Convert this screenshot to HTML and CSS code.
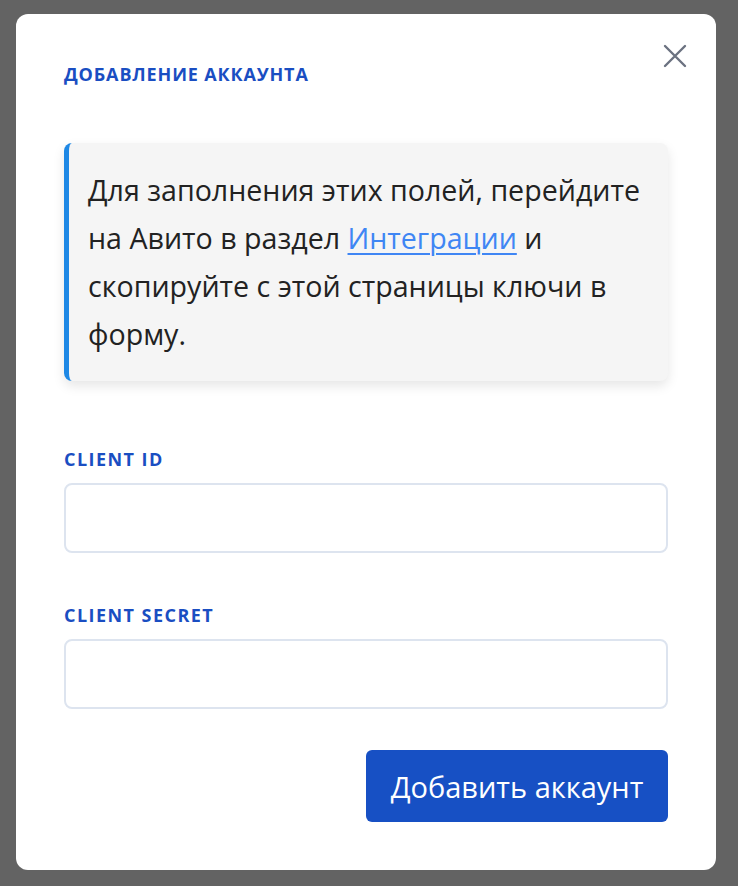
FILE: index.html
```html
<!DOCTYPE html>
<html lang="ru">
<head>
<meta charset="utf-8">
<title>Добавление аккаунта</title>
<link rel="stylesheet" href="styles.css">
</head>
<body>
<div class="overlay">
  <div class="modal">
    <button class="close" aria-label="Закрыть">
      <svg width="24" height="24" viewBox="0 0 24 24"><path d="M2 2 L22 22 M22 2 L2 22" stroke="#6b7280" stroke-width="2.4" stroke-linecap="round" fill="none"/></svg>
    </button>
    <h2 class="title">Добавление аккаунта</h2>
    <div class="note">Для заполнения этих полей, перейдите на Авито в раздел <a href="#">Интеграции</a> и скопируйте с этой страницы ключи в форму.</div>
    <label class="label">Client ID</label>
    <input class="field" type="text">
    <label class="label">Client Secret</label>
    <input class="field" type="text">
    <div class="actions">
      <button class="submit">Добавить аккаунт</button>
    </div>
  </div>
</div>
</body>
</html>
```

FILE: styles.css
```css
html, body {
  margin: 0;
  padding: 0;
  background: #636363;
  font-family: "Open Sans", "Noto Sans", sans-serif;
}
.overlay {
  width: 738px;
  height: 886px;
  padding: 14px 22px 16px 16px;
  box-sizing: border-box;
}
.modal {
  position: relative;
  width: 700px;
  height: 856px;
  box-sizing: border-box;
  background: #fff;
  border-radius: 12px;
  padding: 48px 48px 48px 48px;
  display: flex;
  flex-direction: column;
}
.close {
  position: absolute;
  top: 30px;
  right: 29px;
  width: 24px;
  height: 24px;
  padding: 0;
  border: 0;
  background: none;
}
.close svg { display: block; }
.title {
  margin: 0;
  font-size: 18px;
  line-height: 24px;
  font-weight: 700;
  letter-spacing: 0.85px;
  text-transform: uppercase;
  color: #1a4ec2;
}
.note {
  margin-top: 57px;
  background: #f5f5f5;
  border-left: 5px solid #1e88e5;
  border-radius: 8px;
  padding: 23px 20px 23px 19px;
  font-size: 28.6px;
  line-height: 48px;
  color: #222;
  box-shadow: 0 5px 12px rgba(0,0,0,0.10);
}
.note a {
  color: #3f86f4;
  text-decoration: underline;
  text-underline-offset: 4px;
  text-decoration-thickness: 2px;
}
.label {
  display: block;
  margin-top: 66px;
  font-size: 18px;
  line-height: 24px;
  font-weight: 700;
  letter-spacing: 1.45px;
  text-transform: uppercase;
  color: #1a4ec2;
}
.field {
  display: block;
  margin-top: 12px;
  width: 100%;
  height: 71px;
  box-sizing: border-box;
  border: 2px solid #dde4ef;
  border-radius: 8px;
  background: #fff;
  outline: none;
}
.field + .label { margin-top: 50px; }
.actions {
  display: flex;
  justify-content: flex-end;
  margin-top: 41px;
}
.submit {
  width: 302px;
  height: 72px;
  background: #1750c4;
  color: #fff;
  border: 0;
  border-radius: 6px;
  font-family: "Open Sans", "Noto Sans", sans-serif;
  font-size: 29px;
  padding: 0;
}
```
